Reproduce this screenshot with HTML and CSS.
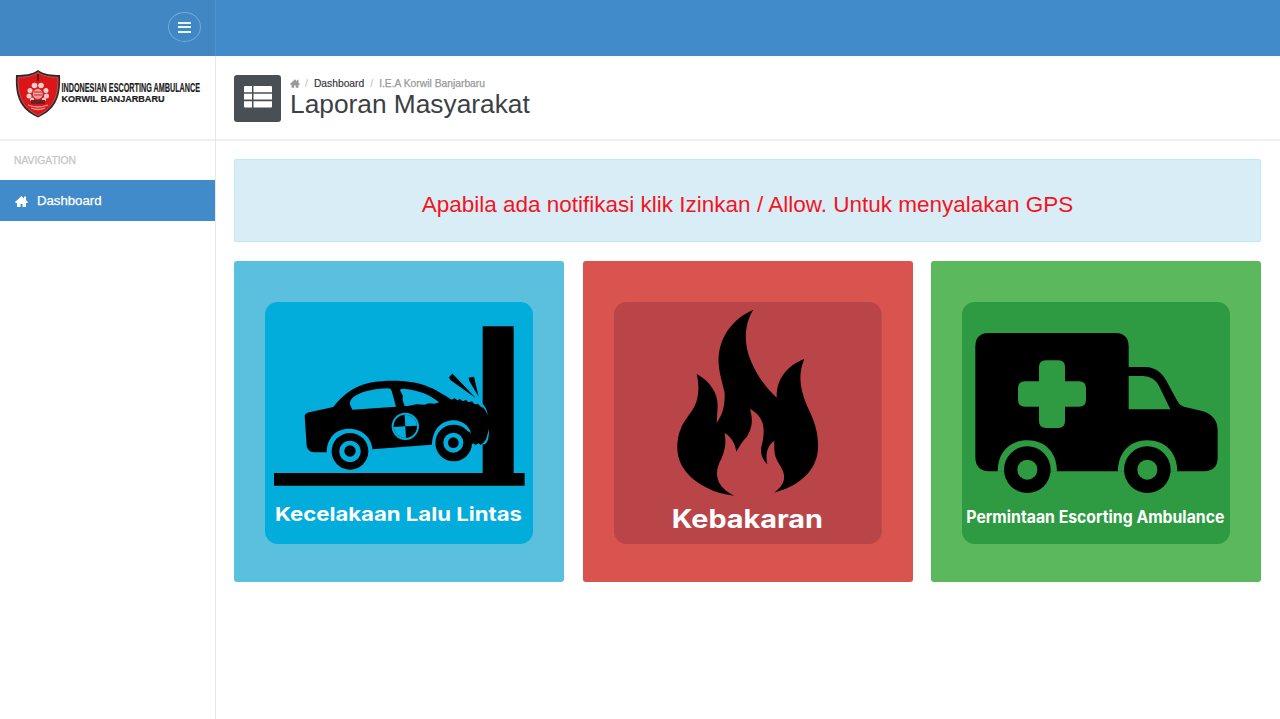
FILE: index.html
```html
<!DOCTYPE html>
<html lang="id">
<head>
<meta charset="utf-8">
<title>Laporan Masyarakat</title>
<link rel="stylesheet" href="styles.css">
</head>
<body>
<header class="topbar">
  <div class="topbar-left">
    <button class="menu-toggle" aria-label="Menu"><span></span><span></span><span></span></button>
  </div>
</header>
<div class="layout">
  <aside class="sidebar">
    <div class="brand">
      <svg class="brand-logo" viewBox="0 0 192 54" role="img" aria-label="Indonesian Escorting Ambulance">
        <path d="M23 4 C29 8.500 37 9 45 9 C46 29 42 43 23 51.500 C4 43 0 29 1 9 C9 9 17 8.500 23 4Z" fill="#3a2525"/>
        <path d="M23 6.500 C29 10.500 36 11.200 42.800 11.300 C43.500 28 40 41 23 49.500 C6 41 2.500 28 3.200 11.300 C10 11.200 17 10.500 23 6.500Z" fill="#dc1519" stroke="#b9777a" stroke-width=".7"/>
        <path d="M23 8v7" stroke="#601314" stroke-width="2"/>
        <g fill="#f6d0ce">
          <circle cx="19.500" cy="19.500" r="2.800"/><circle cx="26" cy="19.500" r="2.800"/>
          <circle cx="15" cy="24.500" r="2.500"/><circle cx="31" cy="24.500" r="2.500"/>
          <circle cx="14" cy="30" r="2.500"/><circle cx="31.500" cy="30" r="2.500"/>
          <circle cx="17" cy="33.500" r="2"/><circle cx="29" cy="33.500" r="2"/>
        </g>
        <circle cx="22.800" cy="28" r="5.400" fill="#eaa2a0" stroke="#d62425" stroke-width="1"/>
        <path d="M19 26h8M19 29h8" stroke="#c52b2b" stroke-width="1.200"/>
        <path d="M16 34h14v4H16z" fill="#672325"/>
        <path d="M13 39q10 4 20 0M16 42q7 3 14 0" fill="none" stroke="#ee9a96" stroke-width="1.300"/>
        <text class="brand-text" x="46.500" y="25.500" font-size="12.800" textLength="138.500" lengthAdjust="spacingAndGlyphs">INDONESIAN ESCORTING AMBULANCE</text>
        <text class="brand-text" x="46.500" y="35.800" font-size="9.400" textLength="103" lengthAdjust="spacingAndGlyphs">KORWIL BANJARBARU</text>
      </svg>
    </div>
    <nav class="nav">
      <div class="nav-title">NAVIGATION</div>
      <a class="nav-item">
        <svg class="home-icon" viewBox="0 0 26 22"><path d="M13 0 L0 12 l1.500 2 H4v8h7v-6h4v6h7v-8h2.500l1.500-2-4-3.700V1h-4v4.500Z"/></svg>
        <span>Dashboard</span>
      </a>
    </nav>
  </aside>
  <main class="main">
    <section class="page-header">
      <div class="page-icon">
        <svg viewBox="0 0 28 22"><path d="M0 1Q0 0 1 0H8V6.200H0ZM9.500 0H27q1 0 1 1V6.200H9.500ZM0 7.800H8V13.500H0ZM9.500 7.800H28V13.500H9.500ZM0 15.200H8V21.500H1q-1 0-1-1ZM9.500 15.200H28V20.500q0 1-1 1H9.500Z"/></svg>
      </div>
      <div>
        <div class="breadcrumb">
          <svg class="crumb-home" viewBox="0 0 26 22"><path d="M13 0 L0 12 l1.500 2 H4v8h7v-6h4v6h7v-8h2.500l1.500-2-4-3.700V1h-4v4.500Z"/></svg>
          <span class="sep">/</span><span class="crumb-link">Dashboard</span><span class="sep">/</span><span>I.E.A Korwil Banjarbaru</span>
        </div>
        <h1 class="page-title">Laporan Masyarakat</h1>
      </div>
    </section>
    <section class="content">
      <div class="alert">Apabila ada notifikasi klik Izinkan / Allow. Untuk menyalakan GPS</div>
      <div class="cards">
        <a class="card card-info">
          <svg class="tile" viewBox="121 154 804 726">
            <rect x="121" y="154" width="804" height="726" rx="38" fill="#02acdb"/>
            <path d="M774 227H867V667H900V705H148V667H774Z"/>
            <path d="M240 496 Q241 488 254 485 L326 469 C350 435 390 405 435 396 C500 386 560 390 600 404 C635 417 655 432 681 447 L690 443 698 449 706 445 714 452 724 448 732 455 742 452 750 461 760 459 766 466 Q780 474 788 490 L796 500 792 540 C792 560 788 572 779 577 L768 583 762 578 752 583 745 577 L640 581 443 596 310 605 H268 Q248 603 246 585Z"/>
            <path d="M378 466 C366 444 405 416 490 413 Q498 413 501 420 L514 468 383 477Z" fill="#02acdb"/>
            <path d="M526 419 Q527 412 550 416 C595 423 620 437 643 455 L631 459 612 458 600 462 575 461 550 466 540 466 534 449 534 434Z" fill="#02acdb"/>
            <path d="M772 458 Q787 472 789 494 Q782 475 769 462Z M793 534 Q794 570 782 580 L767 583 Q784 573 786 560Z" fill="#02acdb"/>
            <circle cx="542" cy="527" r="41" fill="#02acdb"/><circle cx="542" cy="527" r="35"/>
            <path d="M542 527L540 492A35 35 0 0 1 577 525Z M542 527L544 562A35 35 0 0 1 507 529Z" fill="#02acdb"/>
            <path d="M306 606C306 560 335 534 373 534C414 534 443 562 444 604L430 612H320Z" fill="#02acdb"/>
            <path d="M622 586C622 536 650 509 688 509C713 510 733 526 739 546L726 584H635Z" fill="#02acdb"/>
            <circle cx="376" cy="602" r="55"/><circle cx="376" cy="602" r="32" fill="#02acdb"/><circle cx="376" cy="601" r="17"/>
            <circle cx="687" cy="577" r="55"/><circle cx="686" cy="576" r="30" fill="#02acdb"/><circle cx="686" cy="576" r="16"/>
            <path d="M724 540L737 545 746 580 727 573Z"/>
            <path d="M683 369L673 380 677 388 753 442 691 377Z M748 378L732 381 734 391 762 438Z"/>
            <text class="tile-text" x="151" y="811" font-size="58" textLength="741" lengthAdjust="spacingAndGlyphs">Kecelakaan Lalu Lintas</text>
          </svg>
        </a>
        <a class="card card-danger">
          <svg class="tile" viewBox="117 154 804 726">
            <rect x="117" y="154" width="803" height="726" rx="38" fill="#b94548"/>
            <path d="M535 177 C507 220 505 282 529 334 C547 376 573 412 605 441 C604 383 636 346 688 324 C668 373 675 415 696 465 C717 508 731 545 729 592 C727 661 670 707 597 726 C618 710 629 695 627 674 C624 648 603 636 599 607 Q597 588 598 570 C578 584 570 609 577 641 C562 628 555 607 559 588 C566 563 569 540 562 515 Q551 487 525 475 C534 506 533 531 515 559 Q500 574 484 603 C480 578 469 559 449 547 C453 573 452 595 440 622 C421 657 424 677 433 697 Q444 718 477 735 C420 730 364 701 334 665 C303 628 300 578 317 535 C336 491 363 480 369 430 Q373 403 365 370 C407 393 429 429 428 466 L425 517 C443 491 450 466 449 427 C443 397 433 371 431 339 C427 268 467 207 535 177Z"/>
            <text class="tile-text" x="290" y="832" font-size="76" textLength="454" lengthAdjust="spacingAndGlyphs">Kebakaran</text>
          </svg>
        </a>
        <a class="card card-success">
          <svg class="tile" viewBox="112 154 804 726">
            <rect x="112" y="154" width="804" height="726" rx="38" fill="#2e9b42"/>
            <path d="M193 247H571Q612 247 612 288V349H662C693 349 715 370 725 390L758 451Q764 463 778 468L835 482Q879 496 879 540V623Q878 661 838 662H193Q152 660 152 619V288Q152 247 193 247Z"/>
            <path d="M612 376H655Q689 377 703 406L737 476H612Z" fill="#2e9b42"/>
            <path d="M364 329H401Q421 329 421 349V392H463Q484 392 484 413V447Q484 468 463 468H421V511Q421 532 401 532H364Q343 532 343 511V468H301Q280 468 280 447V413Q280 392 301 392H343V349Q343 329 364 329Z" fill="#2e9b42"/>
            <path d="M219 663C219 605 255 569 308 569C361 569 397 605 397 663Z M580 663C580 605 616 569 668 569C721 569 758 605 758 663Z" fill="#2e9b42"/>
            <circle cx="308" cy="657" r="70"/><circle cx="308" cy="657" r="30" fill="#2e9b42"/>
            <circle cx="668" cy="657" r="70"/><circle cx="668" cy="657" r="30" fill="#2e9b42"/>
            <text class="tile-text tile-text-narrow" x="125" y="818" font-size="50" textLength="774" lengthAdjust="spacingAndGlyphs">Permintaan Escorting Ambulance</text>
          </svg>
        </a>
      </div>
    </section>
  </main>
</div>
</body>
</html>
```
FILE: styles.css
```css
* { box-sizing: border-box; }
body {
  margin: 0;
  height: 719px;
  display: flex;
  flex-direction: column;
  overflow: hidden;
  background: #fff;
  font-family: "Liberation Sans", Arial, sans-serif;
}
.topbar { height: 56px; flex: none; background: #428bca; }
.topbar-left {
  width: 216px;
  height: 56px;
  padding: 12px 14px 0 0;
  display: flex;
  justify-content: flex-end;
  background: #4187c3;
  border-right: 1px solid #5293cb;
}
.menu-toggle {
  width: 33px;
  height: 30px;
  padding: 0;
  border: 1px solid #73abd9;
  border-radius: 50%;
  background: transparent;
  display: flex;
  flex-direction: column;
  align-items: center;
  justify-content: center;
  gap: 2px;
}
.menu-toggle span { width: 13px; height: 2px; background: #e6f8fc; }
.menu-toggle span + span { margin-top: 0.5px; }
.layout { flex: 1; display: flex; }
.sidebar { width: 216px; flex: none; border-right: 1px solid #e6e7e9; }
.brand { height: 85px; padding: 9px 0 0 15px; border-bottom: 2px solid #f0f0f0; }
.brand-logo { display: block; width: 192px; height: 54px; margin-top: 1px; overflow: visible; }
.brand-text { font-weight: bold; fill: #202020; stroke: #202020; stroke-width: .2px; }
.nav-title {
  height: 39px;
  padding: 13px 14px 0;
  font-size: 10.3px;
  line-height: 13px;
  color: #c5c5c5;
  -webkit-text-stroke: .25px #c5c5c5;
}
.nav-item {
  height: 41px;
  padding-left: 15px;
  display: flex;
  align-items: center;
  gap: 9px;
  background: #428bca;
  color: #fff;
  font-size: 13.2px;
  -webkit-text-stroke: .25px #fff;
}
.home-icon { width: 13px; height: 11px; margin-top: 1px; fill: #fff; }
.main { flex: 1; }
.page-header {
  height: 85px;
  padding: 19px 18px 0;
  display: flex;
  gap: 9px;
  border-bottom: 2px solid #f0f0f0;
}
.page-icon {
  width: 47px;
  height: 47px;
  border-radius: 3px;
  background: #4a4f53;
  display: flex;
  align-items: center;
  justify-content: center;
}
.page-icon svg { width: 28px; height: 22px; margin-bottom: 4px; fill: #fff; }
.breadcrumb {
  height: 17px;
  display: flex;
  align-items: center;
  font-size: 10.3px;
  color: #999;
  -webkit-text-stroke: .25px #999;
}
.crumb-home { width: 10px; height: 9px; fill: #999; margin-right: 5px; }
.sep { color: #bbb; -webkit-text-stroke: 0; margin-right: 6px; }
.crumb-link { color: #333; -webkit-text-stroke: .15px #333; margin-right: 6px; }
.page-title { margin: -2px 0 0; font-size: 26.3px; line-height: 29px; font-weight: normal; color: #3c4045; }
.content { padding: 18px 19px 0 18px; }
.alert {
  height: 82.5px;
  padding-top: 10px;
  display: flex;
  align-items: center;
  justify-content: center;
  border: 1px solid #bce8f1;
  border-radius: 2px;
  background: #d9edf7;
  color: #f4141d;
  font-size: 22.5px;
}
.cards { margin-top: 19px; display: grid; grid-template-columns: repeat(3, 330px); justify-content: space-between; }
.card { height: 321px; padding: 41px 31px; border-radius: 3px; }
.card-info { background: #5bc0de; }
.card-danger { background: #d9534f; }
.card-success { background: #5cb85c; }
.tile { display: block; width: 268px; height: 242px; overflow: visible; }
.tile-text { font-family: Inter, "Liberation Sans", sans-serif; font-weight: 700; fill: #fff; }
.tile-text-narrow { font-weight: 700; }
```
